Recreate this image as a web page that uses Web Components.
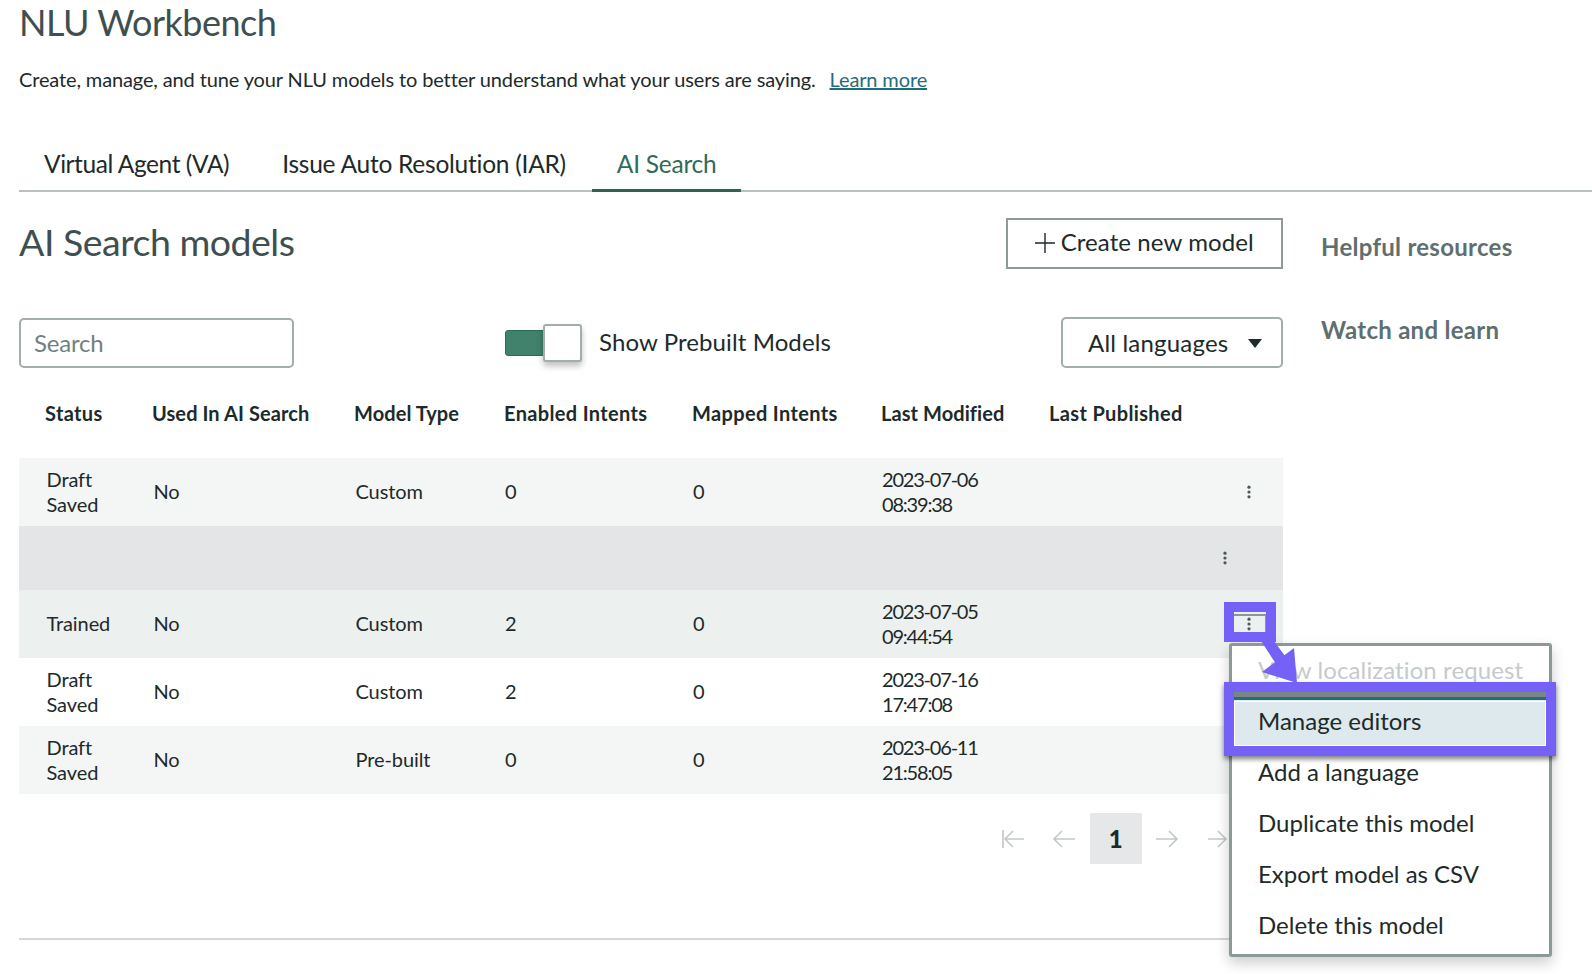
<!DOCTYPE html>
<html lang="en">
<head>
<meta charset="utf-8">
<title>NLU Workbench</title>
<style>
  html, body { margin: 0; padding: 0; background: #fff; }
  body { font-family: Lato, "Noto Sans", sans-serif; color: #1d2a2a; overflow: hidden; height: 974px; }
</style>
</head>
<body>
<nlu-page></nlu-page>

<script>
class NluTab extends HTMLElement {
  constructor() {
    super();
    this.attachShadow({ mode: "open" });
    this.shadowRoot.innerHTML = `
      <style>
        :host { display: block; padding: 0 25px; height: 56px; line-height: 56px; font-size: 24.5px; letter-spacing: -0.25px; box-sizing: border-box; white-space: nowrap; }
        :host([active]) { color: #2f6b57; box-shadow: inset 0 -3px 0 #2c6552; }
      </style>
      <slot></slot>`;
  }
}
customElements.define("nlu-tab", NluTab);

class NluTabs extends HTMLElement {
  constructor() {
    super();
    this.attachShadow({ mode: "open" });
    this.shadowRoot.innerHTML = `
      <style>
        :host { display: flex; box-shadow: inset 0 -2px 0 #b9c1c0; }
      </style>
      <slot></slot>`;
  }
}
customElements.define("nlu-tabs", NluTabs);

class SearchBox extends HTMLElement {
  constructor() {
    super();
    this.attachShadow({ mode: "open" });
    this.shadowRoot.innerHTML = `
      <style>
        :host { display: flex; align-items: center; width: 275px; height: 50px; box-sizing: border-box; border: 2px solid #a3adac; border-radius: 5px; padding-left: 13px; font-size: 24px; letter-spacing: -0.2px; color: #74807f; }
      </style>
      <slot></slot>`;
  }
}
customElements.define("search-box", SearchBox);

class ToggleSwitch extends HTMLElement {
  constructor() {
    super();
    this.attachShadow({ mode: "open" });
    this.shadowRoot.innerHTML = `
      <style>
        :host { display: flex; align-items: center; font-size: 24px; letter-spacing: 0.1px; white-space: nowrap; }
        .track { width: 39px; height: 26px; box-sizing: border-box; background: #41826c; border: 1px solid #2f6b57; border-radius: 3px 0 0 3px; }
        .knob { width: 39px; height: 38px; margin-left: -1px; margin-right: 17px; box-sizing: border-box; background: #fff; border: 2px solid #a3adac; border-radius: 3px; box-shadow: 0 4px 6px rgba(0,0,0,.25); }
        span { display: block; padding-bottom: 2px; }
      </style>
      <div class="track"></div><div class="knob"></div><span><slot></slot></span>`;
  }
}
customElements.define("toggle-switch", ToggleSwitch);

class SelectBox extends HTMLElement {
  constructor() {
    super();
    this.attachShadow({ mode: "open" });
    this.shadowRoot.innerHTML = `
      <style>
        :host { display: flex; align-items: center; width: 221.5px; height: 51px; box-sizing: border-box; border: 2px solid #a3adac; border-radius: 5px; padding-left: 25px; font-size: 24px; letter-spacing: 0.2px; white-space: nowrap; }
        svg { margin-left: 20px; margin-top: 1px; }
      </style>
      <slot></slot>
      <svg width="14" height="9" viewBox="0 0 14 9"><path d="M0 0h14L7 9z" fill="#1d2a2a"/></svg>`;
  }
}
customElements.define("select-box", SelectBox);

class CreateButton extends HTMLElement {
  constructor() {
    super();
    this.attachShadow({ mode: "open" });
    this.shadowRoot.innerHTML = `
      <style>
        :host { display: flex; align-items: center; justify-content: center; gap: 6px; width: 276.5px; height: 51px; box-sizing: border-box; border: 2px solid #8e9a99; font-size: 24px; letter-spacing: 0.1px; white-space: nowrap; }
        span { display: block; padding-bottom: 4px; }
        svg { margin-bottom: 1px; }
      </style>
      <svg width="20" height="20" viewBox="0 0 20 20"><path d="M10 0v20M0 10h20" stroke="#1d2a2a" stroke-width="1.4" fill="none"/></svg>
      <span><slot></slot></span>`;
  }
}
customElements.define("create-button", CreateButton);

class KebabButton extends HTMLElement {
  constructor() {
    super();
    this.attachShadow({ mode: "open" });
    this.shadowRoot.innerHTML = `
      <style>
        :host { display: flex; align-items: center; justify-content: center; width: 32px; height: 20px; padding-right: 2px; box-sizing: border-box; }
        :host([focused]) { box-shadow: inset 0 2px 0 #8b9594, inset -1px 0 0 #d9785a; }
      </style>
      <svg width="4" height="14" viewBox="0 0 4 14" fill="#4b5857"><circle cx="2" cy="2.2" r="1.6"/><circle cx="2" cy="7" r="1.6"/><circle cx="2" cy="11.8" r="1.6"/></svg>`;
  }
}
customElements.define("kebab-button", KebabButton);

const TABLE_COLUMNS = "107px 202px 150px 188px 189px 168px 1fr";

class ModelHead extends HTMLElement {
  constructor() {
    super();
    this.attachShadow({ mode: "open" });
    const labels = ["Status", "Used In AI Search", "Model Type", "Enabled Intents", "Mapped Intents", "Last Modified", "Last Published"];
    this.shadowRoot.innerHTML = `
      <style>
        :host { display: grid; grid-template-columns: ${TABLE_COLUMNS}; align-items: center; height: 90px; padding-left: 26px; font-size: 20px; font-weight: 700; letter-spacing: 0.08px; white-space: nowrap; }
        .wide { letter-spacing: 0.35px; }
      </style>
      ${labels.map((l, i) => `<div class="${[0, 3, 4, 6].includes(i) ? "wide" : ""}">${l}</div>`).join("")}`;
  }
}
customElements.define("model-head", ModelHead);

class ModelRow extends HTMLElement {
  constructor() {
    super();
    this.attachShadow({ mode: "open" });
  }

  connectedCallback() {
    const a = n => this.getAttribute(n) || "";
    const lines = s => s.split("|").join("<br>");
    const focused = this.hasAttribute("focused") ? "focused" : "";
    this.shadowRoot.innerHTML = `
      <style>
        :host { display: grid; grid-template-columns: ${TABLE_COLUMNS}; align-items: center; height: 68px; padding-left: 27.5px; box-sizing: border-box; font-size: 20px; line-height: 25.5px; letter-spacing: -0.1px; white-space: nowrap; }
        :host([tone="soft"]) { background: #f4f6f5; }
        :host([tone="gray"]) { background: #e4e5e7; height: 64px; }
        :host([tone="hover"]) { background: #ecf1ef; }
        .date { letter-spacing: -1.2px; margin-left: -0.5px; }
        .act { justify-self: end; margin-right: 16.5px; }
        :host([tone="gray"]) .act { margin-right: 40.5px; }
      </style>
      <div>${lines(a("status"))}</div>
      <div>${a("used")}</div>
      <div>${a("type")}</div>
      <div class="date">${a("enabled")}</div>
      <div class="date">${a("mapped")}</div>
      <div class="date">${lines(a("modified"))}</div>
      <kebab-button class="act" ${focused}></kebab-button>`;
  }
}
customElements.define("model-row", ModelRow);

class PagerBar extends HTMLElement {
  constructor() {
    super();
    this.attachShadow({ mode: "open" });
    const arrow = d => `<div class="cell"><svg width="24" height="20" viewBox="0 0 24 20" fill="none" stroke="#c2c8c7" stroke-width="1.6"><path d="${d}"/></svg></div>`;
    this.shadowRoot.innerHTML = `
      <style>
        :host { display: flex; justify-content: flex-end; height: 51px; padding-right: 38px; }
        .cell { width: 51.5px; height: 51px; display: flex; align-items: center; justify-content: center; }
        .page { background: #e5e7e8; font-size: 24px; font-weight: 900; }
      </style>
      ${arrow("M2 1v18M23 10H5M12 2l-8 8 8 8")}
      ${arrow("M23 10H2M10 2l-8 8 8 8")}
      <div class="cell page">1</div>
      ${arrow("M1 10h21M14 2l8 8-8 8")}
      ${arrow("M1 10h18M11 2l8 8-8 8")}`;
  }
}
customElements.define("pager-bar", PagerBar);

class ActionsMenu extends HTMLElement {
  constructor() {
    super();
    this.attachShadow({ mode: "open" });
    const items = ["Manage editors", "Add a language", "Duplicate this model", "Export model as CSV", "Delete this model"];
    this.shadowRoot.innerHTML = `
      <style>
        :host { position: absolute; left: 1229px; top: 643px; width: 323px; height: 314px; box-sizing: border-box; background: #fff; border: 3px solid #8b9a98; border-radius: 3px; box-shadow: 0 6px 14px rgba(0,0,0,.2); font-size: 24px; letter-spacing: 0; white-space: nowrap; }
        div { height: 51px; line-height: 51px; padding-left: 26px; }
        .off { color: #c6caca; margin-top: -2px; letter-spacing: 0.1px; }
        .sel { background: #dde9ec; height: 46px; line-height: 41px; margin-top: 1px; border-top: 4px solid #2b6a7c; }
      </style>
      <div class="off">View localization request</div>
      ${items.map((t, i) => `<div class="${i ? "" : "sel"}">${t}</div>`).join("")}`;
  }
}
customElements.define("actions-menu", ActionsMenu);

class CalloutFrame extends HTMLElement {
  constructor() {
    super();
    this.attachShadow({ mode: "open" });
    this.shadowRoot.innerHTML = `
      <style>
        :host { position: absolute; box-sizing: border-box; border: 10px solid #7561f5; }
        :host([wide]) { box-shadow: inset 0 5px 0 0 #7a8684, 0 3px 5px rgba(0,0,0,.5); }
        :host([wide])::after { content: ""; position: absolute; left: 0; right: 0; top: 9px; bottom: 0; border: 1px solid #fff; }
      </style>`;
  }
}
customElements.define("callout-frame", CalloutFrame);

class CalloutArrow extends HTMLElement {
  constructor() {
    super();
    this.attachShadow({ mode: "open" });
    this.shadowRoot.innerHTML = `
      <style>
        :host { position: absolute; left: 1255px; top: 640px; display: block; width: 46px; height: 46px; }
        svg { display: block; }
      </style>
      <svg width="46" height="46" viewBox="1255 640 46 46" fill="#7561f5">
        <path d="M1261 641h13l11 15-9 8z"/>
        <path d="M1294 648l3 35-35-11z"/>
      </svg>`;
  }
}
customElements.define("callout-arrow", CalloutArrow);

class NluPage extends HTMLElement {
  constructor() {
    super();
    this.attachShadow({ mode: "open" });
    this.shadowRoot.innerHTML = `
      <style>
        :host { display: block; position: relative; height: 974px; padding-left: 19px; box-sizing: border-box; }
        h1 { margin: 0; height: 47px; line-height: 45px; font-size: 36px; font-weight: 400; letter-spacing: -0.5px; color: #3f4f4f; }
        .intro { margin: 19px 0 0; height: 26px; line-height: 26px; font-size: 20px; letter-spacing: -0.13px; }
        .intro a { color: #1f6d7e; margin-left: 9px; }
        nlu-tabs { margin-top: 44px; }
        .body { display: grid; grid-template-columns: 1263.5px 1fr; column-gap: 38.5px; }
        .top { display: flex; justify-content: space-between; align-items: center; margin-top: 26px; }
        h2 { margin: 0; padding-bottom: 4px; font-size: 37.5px; font-weight: 400; letter-spacing: -0.5px; color: #3f4f4f; }
        .tools { display: flex; align-items: center; margin-top: 48px; height: 51px; }
        toggle-switch { margin-left: 211px; }
        select-box { margin-left: auto; }
        pager-bar { margin-top: 19px; }
        hr { margin: 74px 0 0; border: 0; height: 2px; background: #d3d8d7; }
        aside { padding-top: 40px; font-size: 24px; font-weight: 700; letter-spacing: 0.27px; color: #5f6f6f; line-height: 30px; }
        aside div + div { margin-top: 53px; }
      </style>
      <h1>NLU Workbench</h1>
      <p class="intro">Create, manage, and tune your NLU models to better understand what your users are saying. <a href="#">Learn more</a></p>
      <nlu-tabs>
        <nlu-tab style="letter-spacing:-0.43px;padding-right:28px">Virtual Agent (VA)</nlu-tab>
        <nlu-tab style="padding-right:26px">Issue Auto Resolution (IAR)</nlu-tab>
        <nlu-tab active>AI Search</nlu-tab>
      </nlu-tabs>
      <div class="body">
        <main>
          <div class="top">
            <h2>AI Search models</h2>
            <create-button>Create new model</create-button>
          </div>
          <div class="tools">
            <search-box>Search</search-box>
            <toggle-switch>Show Prebuilt Models</toggle-switch>
            <select-box>All languages</select-box>
          </div>
          <model-head></model-head>
          <model-row tone="soft" status="Draft|Saved" used="No" type="Custom" enabled="0" mapped="0" modified="2023-07-06|08:39:38"></model-row>
          <model-row tone="gray"></model-row>
          <model-row tone="hover" focused status="Trained" used="No" type="Custom" enabled="2" mapped="0" modified="2023-07-05|09:44:54"></model-row>
          <model-row status="Draft|Saved" used="No" type="Custom" enabled="2" mapped="0" modified="2023-07-16|17:47:08"></model-row>
          <model-row tone="soft" status="Draft|Saved" used="No" type="Pre-built" enabled="0" mapped="0" modified="2023-06-11|21:58:05"></model-row>
          <pager-bar></pager-bar>
          <hr>
        </main>
        <aside>
          <div>Helpful resources</div>
          <div>Watch and learn</div>
        </aside>
      </div>
      <actions-menu></actions-menu>
      <callout-frame style="left:1224px;top:602px;width:52px;height:40px"></callout-frame>
      <callout-frame wide style="left:1224px;top:682px;width:332px;height:74px"></callout-frame>
      <callout-arrow></callout-arrow>`;
  }
}
customElements.define("nlu-page", NluPage);
</script>
</body>
</html>
